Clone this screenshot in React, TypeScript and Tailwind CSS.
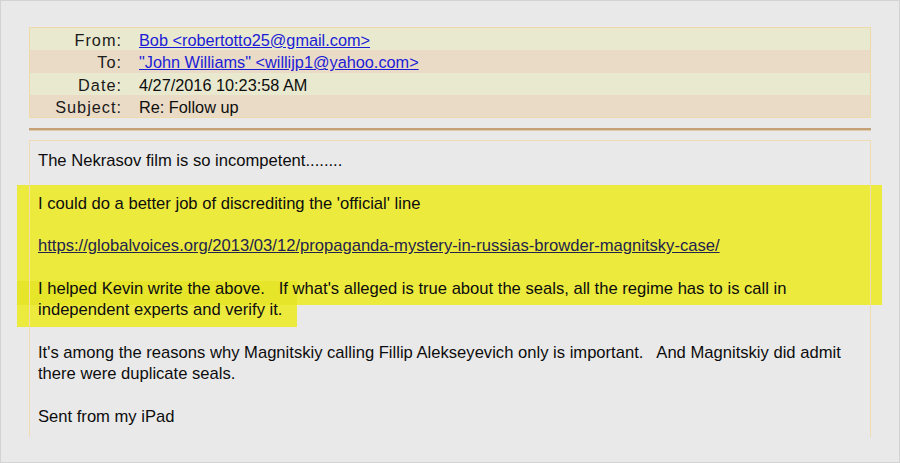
import React from "react";

const rows: { label: string; value: string; link?: boolean; bg: string }[] = [
  { label: "From:", value: "Bob <robertotto25@gmail.com>", link: true, bg: "bg-[#e9e9cf]" },
  { label: "To:", value: "\"John Williams\" <willijp1@yahoo.com>", link: true, bg: "bg-[#e9dbc6]" },
  { label: "Date:", value: "4/27/2016 10:23:58 AM", bg: "bg-[#e9e9cf]" },
  { label: "Subject:", value: "Re: Follow up", bg: "bg-[#e9dbc6]" },
];

export default function App() {
  return (
    <div
      className="relative w-[900px] h-[463px] overflow-hidden bg-[#e9e9e9] border border-[#d3d3d3] text-[16.3px] text-[#0d0d0d]"
      style={{ fontFamily: '"Liberation Sans", Arial, sans-serif' }}
    >
      {/* highlights */}
      <div className="absolute left-[16px] top-[184px] w-[865px] h-[120px] bg-[#ecea3d]" />
      <div className="absolute left-[16px] top-[280px] w-[280px] h-[46px] bg-[#ecea3d]" />
      <div className="absolute left-[16px] top-[280px] w-[280px] h-[24px] bg-[#e6e52a]" />

      <div className="relative pt-[26px] pl-[28px]">
        {/* header */}
        <div className="w-[842px] border border-[#efd8aa]">
          {rows.map((r) => (
            <div key={r.label} className={`flex h-[22.3px] pt-[3px] leading-[19.3px] ${r.bg}`}>
              <div className="w-[92px] text-right tracking-[1px] text-[#1a1a1a]">{r.label}</div>
              <div className="pl-[17px] whitespace-nowrap">
                {r.link ? (
                  <span className="text-[#1c1cd6] underline">{r.value}</span>
                ) : (
                  <span>{r.value}</span>
                )}
              </div>
            </div>
          ))}
        </div>

        {/* separator */}
        <div className="mt-[9.5px] w-[842px] h-[3px] border-t-2 border-b border-t-[#c5a177] border-b-[#dfcba9]" />

        {/* body */}
        <div className="mt-[9.3px] w-[842px] h-[297px] border-t border-l border-r border-[#efdcb4] pl-[8px] pt-[9px] text-[16.6px] leading-[21.3px]">
          <p className="whitespace-nowrap">The Nekrasov film is so incompetent........</p>
          <p className="mt-[21.3px] whitespace-nowrap">I could do a better job of discrediting the 'official' line</p>
          <p className="mt-[21.3px] whitespace-nowrap">
            <span className="text-[#23234d] underline">
              https://globalvoices.org/2013/03/12/propaganda-mystery-in-russias-browder-magnitsky-case/
            </span>
          </p>
          <p className="mt-[21.3px] whitespace-pre">
            {"I helped Kevin write the above.   If what's alleged is true about the seals, all the regime has to is call in"}
            <br />
            {"independent experts and verify it."}
          </p>
          <p className="mt-[21.3px] whitespace-pre">
            {"It's among the reasons why Magnitskiy calling Fillip Alekseyevich only is important.   And Magnitskiy did admit"}
            <br />
            {"there were duplicate seals."}
          </p>
          <p className="mt-[21.3px] whitespace-nowrap">Sent from my iPad</p>
        </div>
      </div>
    </div>
  );
}
